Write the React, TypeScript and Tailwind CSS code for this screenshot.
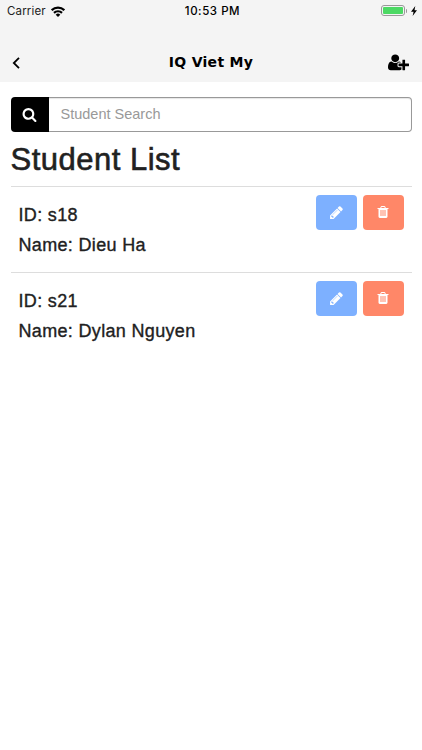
import React from "react";

interface Student {
  id: string;
  name: string;
}

const students: Student[] = [
  { id: "s18", name: "Dieu Ha" },
  { id: "s21", name: "Dylan Nguyen" },
];

const SearchIcon = () => (
  <svg className="w-[15px] h-[15px]" viewBox="0 0 1792 1792" fill="currentColor">
    <path d="M1216 832q0-185-131.500-316.500t-316.500-131.500-316.500 131.500-131.500 316.500 131.500 316.500 316.500 131.500 316.500-131.500 131.500-316.500zm512 832q0 52-38 90t-90 38q-54 0-90-38l-343-342q-179 124-399 124-143 0-273.500-55.500t-225-150-150-225-55.500-273.500 55.500-273.500 150-225 225-150 273.500-55.500 273.500 55.500 225 150 150 225 55.500 273.500q0 220-124 399l343 343q37 37 37 90z" />
  </svg>
);

const PencilIcon = () => (
  <svg className="w-[15px] h-[15px]" viewBox="0 0 1792 1792" fill="currentColor">
    <path d="M491 1536l91-91-235-235-91 91v107h128v128h107zm523-928q0-22-22-22-10 0-17 7l-542 542q-7 7-7 17 0 22 22 22 10 0 17-7l542-542q7-7 7-17zm-54-192l416 416-832 832h-416v-416zm683 96q0 53-37 90l-166 166-416-416 166-165q36-38 90-38 53 0 91 38l235 234q37 39 37 91z" />
  </svg>
);

const TrashIcon = () => (
  <svg className="w-[14px] h-[14px]" viewBox="0 0 1792 1792" fill="currentColor">
    <path d="M704 1376v-704q0-14-9-23t-23-9h-64q-14 0-23 9t-9 23v704q0 14 9 23t23 9h64q14 0 23-9t9-23zm256 0v-704q0-14-9-23t-23-9h-64q-14 0-23 9t-9 23v704q0 14 9 23t23 9h64q14 0 23-9t9-23zm256 0v-704q0-14-9-23t-23-9h-64q-14 0-23 9t-9 23v704q0 14 9 23t23 9h64q14 0 23-9t9-23zm-544-992h448l-48-117q-7-9-17-11h-317q-10 2-17 11zm928 32v64q0 14-9 23t-23 9h-96v948q0 83-47 143.500t-113 60.500h-832q-66 0-113-58.500t-47-141.500v-952h-96q-14 0-23-9t-9-23v-64q0-14 9-23t23-9h309l70-167q15-37 54-63t79-26h320q40 0 79 26t54 63l70 167h309q14 0 23 9t9 23z" />
  </svg>
);

const UserPlusIcon = () => (
  <svg className="w-[21px] h-[18.5px]" viewBox="0 0 2048 1792" fill="currentColor">
    <path d="M704 896q-159 0-271.500-112.500t-112.500-271.500 112.500-271.500 271.500-112.500 271.500 112.500 112.500 271.500-112.500 271.500-271.500 112.500zm960 128h352q13 0 22.500 9.500t9.500 22.500v192q0 13-9.500 22.500t-22.500 9.500h-352v352q0 13-9.500 22.500t-22.500 9.500h-192q-13 0-22.500-9.500t-9.500-22.500v-352h-352q-13 0-22.500-9.500t-9.500-22.500v-192q0-13 9.500-22.500t22.500-9.500h352v-352q0-13 9.500-22.500t22.500-9.500h192q13 0 22.500 9.500t9.500 22.500v352zm-736 224q0 52 38 90t90 38h256v238q-68 50-171 50h-874q-121 0-194-69t-73-190q0-53 3.500-103.500t14-109 26.500-108.500 43-97.500 62-81 85.500-53.500 111.500-20q19 0 39 17 79 61 154.500 91.500t164.500 30.500 164.500-30.500 154.500-91.500q20-17 39-17 132 0 217 96h-223q-52 0-90 38t-38 90v192z" />
  </svg>
);

const WifiIcon = () => (
  <svg className="w-[14px] h-[11px]" viewBox="0 0 14 11" fill="none" stroke="currentColor" strokeWidth="2.2">
    <path d="M0.7 4.2a8.9 8.9 0 0 1 12.6 0" />
    <path d="M3 6.9a5.7 5.7 0 0 1 8 0" />
    <path d="M7 11L4.7 8.7a3.2 3.2 0 0 1 4.6 0z" fill="currentColor" stroke="none" />
  </svg>
);

const StatusBar = () => (
  <div className="grid grid-cols-3 items-center h-[22px] px-[7px] font-['Inter',sans-serif] text-[11.5px]">
    <div className="flex items-center gap-[5px] tracking-[0.15px] pt-px">
      <span className="text-[#222]">Carrier</span>
      <WifiIcon />
    </div>
    <div className="text-center font-medium tracking-[0.55px] whitespace-nowrap pt-[2px] pl-[3px]">
      10:53 PM
    </div>
    <div className="flex items-center justify-end -mr-[2px] -mt-px">
      {/* Battery */}
      <div className="w-6 h-[11px] p-px border border-[#999] rounded-[3px]">
        <div className="h-full bg-[#4cd964] rounded-[1px]" />
      </div>
      <div className="w-px h-1 ml-px bg-[#999] rounded-r-sm" />
      <svg className="w-[6px] h-[10px] ml-1" viewBox="0 0 6 10" fill="currentColor">
        <path d="M4.3 0L0 5.7h2.6L1.6 10 6 4.2H3.5z" />
      </svg>
    </div>
  </div>
);

const NavBar = () => (
  <div className="grid grid-cols-[60px_1fr_60px] items-center h-[38px] mt-[22px] px-3">
    <button aria-label="Back">
      <svg className="w-2 h-3" viewBox="0 0 8 12" fill="none" stroke="currentColor" strokeWidth="1.8">
        <path d="M7 0.8L1.8 6 7 11.2" />
      </svg>
    </button>
    <h1 className="text-center font-['DejaVu_Sans',sans-serif] font-bold text-[14px] leading-5 tracking-[0.3px] -mt-[3px]">
      IQ Viet My
    </h1>
    <button aria-label="Add student" className="justify-self-end mr-px -mt-[2px]">
      <UserPlusIcon />
    </button>
  </div>
);

const StudentRow: React.FC<{ student: Student }> = ({ student }) => (
  <li className="flex justify-between h-[86px] pt-2 px-2 border-t border-[#ddd]">
    <div className="pt-[5px] text-[18px] leading-[30px] tracking-[0.33px] [-webkit-text-stroke:0.35px]">
      <p>ID: {student.id}</p>
      <p>Name: {student.name}</p>
    </div>
    <div className="flex gap-[6px] text-white">
      <button
        aria-label="Edit"
        className="flex items-center justify-center w-[41px] h-[35px] rounded bg-[#7db0ff]"
      >
        <PencilIcon />
      </button>
      <button
        aria-label="Delete"
        className="flex items-center justify-center w-[41px] h-[35px] rounded bg-[#ff8768]"
      >
        <TrashIcon />
      </button>
    </div>
  </li>
);

const App: React.FC = () => {
  return (
    <div className="min-h-screen bg-white text-black">
      <header className="h-[82px] bg-[#f4f4f4]">
        <StatusBar />
        <NavBar />
      </header>

      <main className="px-[10.5px] pt-[15px] font-['Liberation_Sans',sans-serif] text-[#212121]">
        <div className="flex h-[35px]">
          <span className="flex items-center justify-center w-[38px] rounded-l bg-black text-white">
            <SearchIcon />
          </span>
          <input
            type="text"
            placeholder="Student Search"
            className="flex-1 min-w-0 px-3 text-[14.5px] border border-l-0 border-[#999] rounded-r shadow-[inset_0_1px_1px_rgba(0,0,0,0.1)] placeholder:text-[#999] outline-none"
          />
        </div>

        <h2 className="mt-[9px] h-[44px] text-[31px] leading-[38px] tracking-[0.5px] [-webkit-text-stroke:0.6px]">
          Student List
        </h2>

        <ul className="pt-[0.5px]">
          {students.map((student) => (
            <StudentRow key={student.id} student={student} />
          ))}
        </ul>
      </main>
    </div>
  );
};

export default App;
